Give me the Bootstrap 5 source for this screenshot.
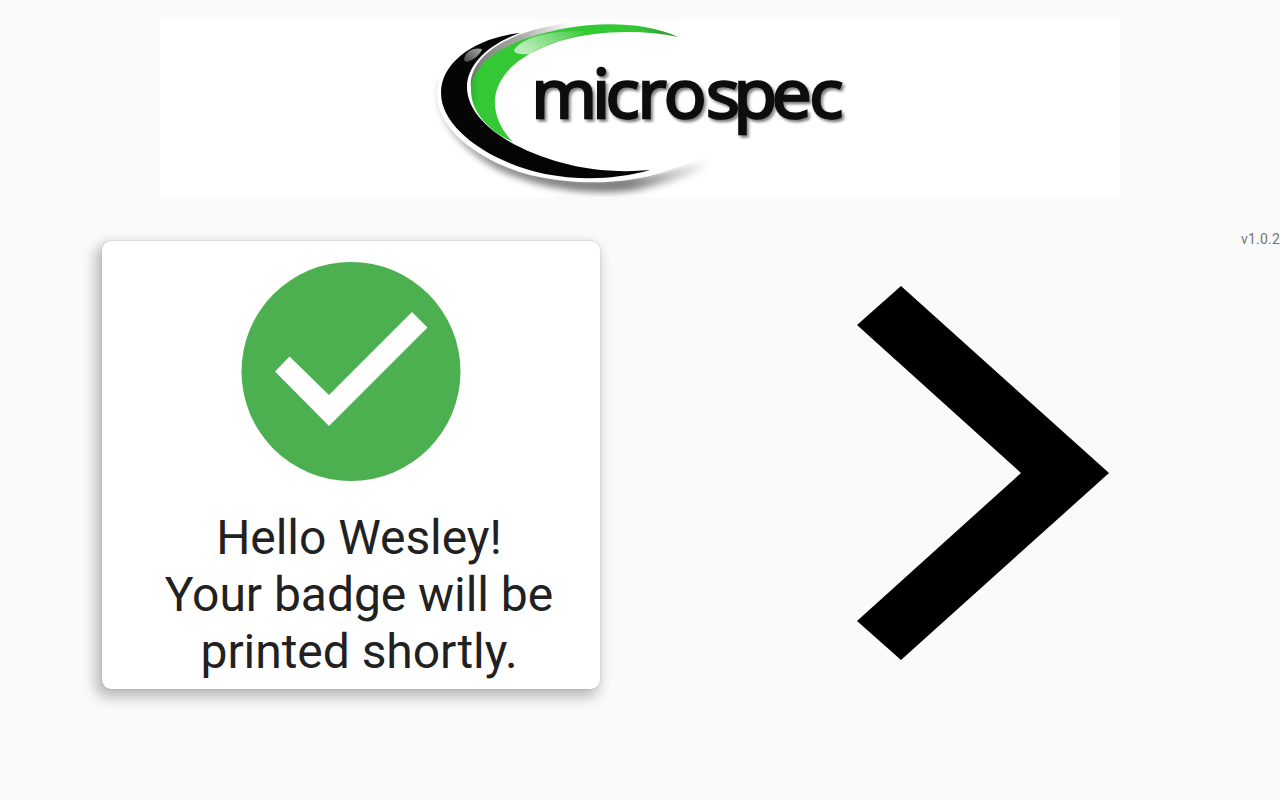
<!DOCTYPE html>
<html lang="en">

<head>
    <meta charset="UTF-8">
    <meta name="viewport" content="width=device-width, initial-scale=1.0">
    <title>Badge Printing</title>
    <link rel="stylesheet" href="https://cdn.jsdelivr.net/npm/bootstrap@5.3.0/dist/css/bootstrap.min.css">
    <style>
        body {
            height: 800px;
            background-color: #fafafa;
            color: #212121;
            font-family: Roboto, sans-serif;
            overflow: hidden;
        }

        .logo-banner {
            width: 960px;
            height: 178px;
            margin-top: 19px;
            background-color: #fff;
        }

        .version-row {
            height: 44px;
            padding-top: 34px;
            font-size: 14px;
            line-height: 16px;
            letter-spacing: 0.2px;
            color: #757575;
        }

        .badge-card {
            width: 498px;
            height: 448px;
            margin-left: 102px;
            padding-top: 20px;
            border: 0;
            border-radius: 9px;
            box-shadow: -4px 6px 14px 2px rgba(0, 0, 0, 0.27), 0 0 2px rgba(0, 0, 0, 0.2);
        }

        .badge-message {
            margin: 28px 0 0 16px;
            font-size: 48px;
            line-height: 57px;
            letter-spacing: -0.05px;
        }

        .next-arrow {
            margin: 44px 0 0 256.5px;
        }
    </style>
</head>

<body>
    <!-- Logo -->
    <header class="logo-banner mx-auto">
        <svg class="d-block" width="960" height="178" viewBox="160 19 960 178">
            <defs>
                <linearGradient id="swooshGreen" x1="0" y1="0" x2="1" y2="0">
                    <stop offset="0" stop-color="#2fb531" />
                    <stop offset="0.04" stop-color="#34c934" />
                    <stop offset="0.8" stop-color="#34c934" />
                    <stop offset="1" stop-color="#3b8c3b" />
                </linearGradient>
                <linearGradient id="edgeGrey" gradientUnits="userSpaceOnUse" x1="472" y1="85" x2="572" y2="25">
                    <stop offset="0" stop-color="#6e756e" />
                    <stop offset="0.55" stop-color="#a3a8a3" />
                    <stop offset="1" stop-color="#fff" />
                </linearGradient>
                <linearGradient id="greenShine" x1="0" y1="0.4" x2="1" y2="0">
                    <stop offset="0" stop-color="#fff" stop-opacity="0.65" />
                    <stop offset="1" stop-color="#fff" stop-opacity="0.05" />
                </linearGradient>
                <linearGradient id="blackShine" x1="0" y1="1" x2="1" y2="0">
                    <stop offset="0" stop-color="#444" />
                    <stop offset="1" stop-color="#aaa" />
                </linearGradient>
                <linearGradient id="shadowFade" gradientUnits="userSpaceOnUse" x1="440" y1="0" x2="710" y2="0">
                    <stop offset="0" stop-color="#000" stop-opacity="0.45" />
                    <stop offset="0.7" stop-color="#000" stop-opacity="0.5" />
                    <stop offset="1" stop-color="#000" stop-opacity="0" />
                </linearGradient>
                <filter id="softShadow" x="-10%" y="-20%" width="120%" height="140%">
                    <feGaussianBlur stdDeviation="3.5" />
                </filter>
                <filter id="textShadow" x="-5%" y="-20%" width="110%" height="150%">
                    <feDropShadow dx="2" dy="2.5" stdDeviation="1.3" flood-color="#000" flood-opacity="0.5" />
                </filter>
            </defs>
            <path d="M441 78 C434 112 452 143 497 169 C545 192 608 199 655 186 C679 179 695 174 708 167 L703 160 C650 182 560 185 500 160 C455 140 442 115 441 78Z" fill="url(#shadowFade)" filter="url(#softShadow)" />
            <!-- white body over the shadow -->
            <path d="M520 30 C473 38 438 62 437 95 C437 127 475 160 530 175 C580 187 630 183 664 172 L709 156 L660 60 L640 35Z" fill="#fff" />
            <path d="M520 33 C475 38 441 62 441 93 C441 128 489 162 545 174 C582 181 618 179 650 170 C620 173 587 170 563 163 C510 149 467 120 467 87 C467 64 489 44 520 33Z" fill="#050505" />
            <path d="M464 60 C465 51 474 47 482 49 C481 54 473 61 466 62Z" fill="url(#blackShine)" />
            <path d="M471 88 C468 65 492 34 567 23 L590 26 C540 30 500 45 471 88Z" fill="url(#edgeGrey)" />
            <path d="M678 37 C647 22 600 22 567 28 C500 40 471 66 471 90 C471 111 487 130 513 142 C501 130 494 115 495 99 C498 71 525 52 560 41 C595 31 640 29 678 37Z" fill="url(#swooshGreen)" />
            <path d="M514 50 C524 36 550 31 586 31 C578 38 548 41 530 54 C522 55 514 54 514 50Z" fill="url(#greenShine)" />
            <text transform="scale(1.06 1)" x="501.2 558.8 571.2 601.5 626.3 666 692 728 763.500" y="118" font-family="Open Sans, sans-serif" font-size="67" font-weight="400" fill="#080808" stroke="#080808" stroke-width="2.500" filter="url(#textShadow)">microspec</text>
        </svg>
    </header>

    <div class="version-row text-end">v1.0.2</div>

    <!-- Confirmation card and next arrow -->
    <main class="d-flex align-items-start">
        <div class="card badge-card flex-shrink-0 text-center">
            <svg class="d-block mx-auto" width="220" height="220" viewBox="0 -1 220 220">
                <circle cx="110" cy="109.500" r="109.500" fill="#4caf50" />
                <path d="M34 109.500L48.500 94.500L88 133L171 50L186.500 65.500L88 164Z" fill="#fff" />
            </svg>
            <p class="badge-message">Hello Wesley!<br>Your badge will be<br>printed shortly.</p>
        </div>
        <svg class="next-arrow flex-shrink-0" width="253" height="376" viewBox="0 0 253 376">
            <path d="M44 1L252 188L44 375L0 336L164 188L0 40Z" fill="#000" />
        </svg>
    </main>
    <script src="https://cdn.jsdelivr.net/npm/bootstrap@5.3.0/dist/js/bootstrap.bundle.min.js"></script>
</body>

</html>
